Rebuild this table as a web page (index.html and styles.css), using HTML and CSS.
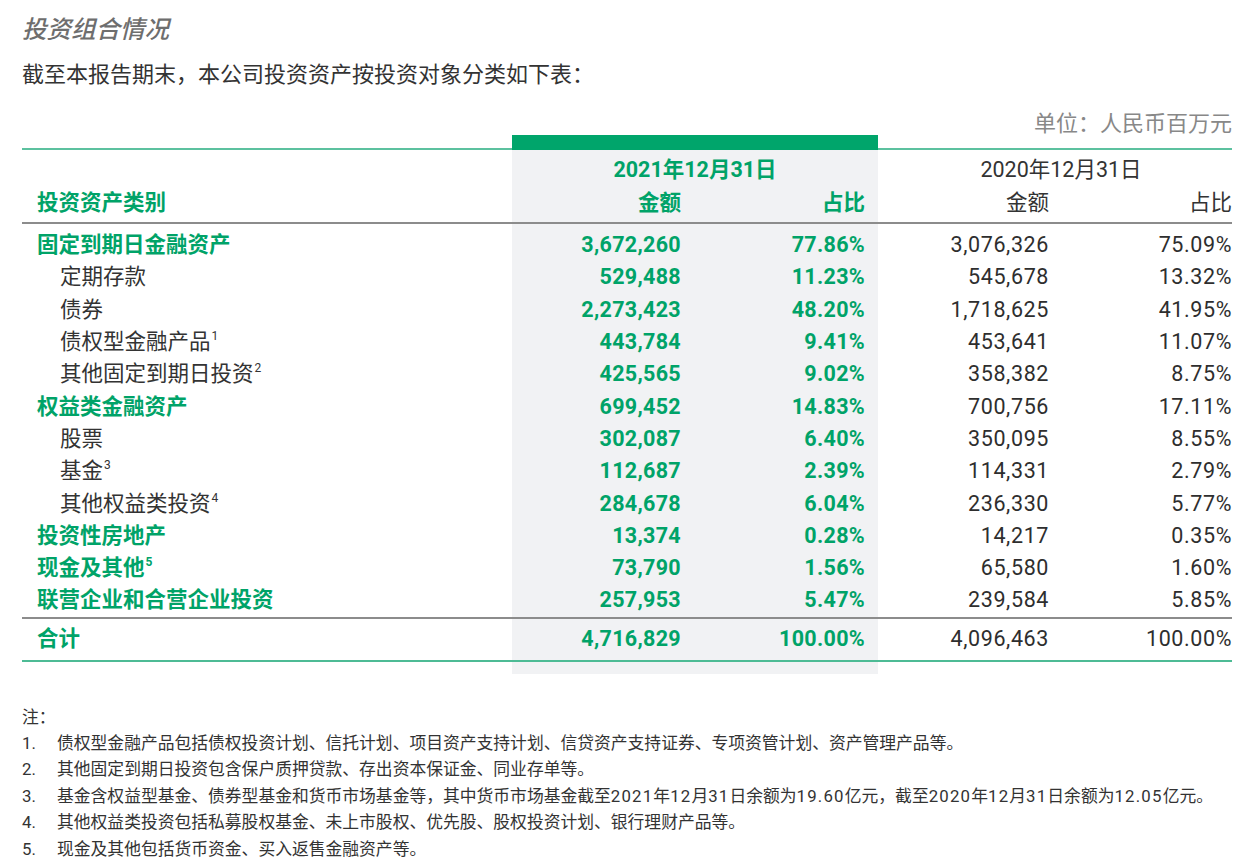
FILE: index.html
```html
<!DOCTYPE html>
<html lang="zh-CN">
<head>
<meta charset="utf-8">
<title>投资组合情况</title>
<link rel="stylesheet" href="styles.css">
</head>
<body>
<div class="page">
  <h2 class="title">投资组合情况</h2>
  <p class="intro">截至本报告期末，本公司投资资产按投资对象分类如下表：</p>
  <div class="unit">单位：人民币百万元</div>
  <table class="tbl">
    <colgroup>
      <col class="c-label"><col class="c-a"><col class="c-b"><col class="c-c"><col class="c-d">
    </colgroup>
    <thead>
      <tr class="bar-row">
        <td class="bar-line"></td>
        <td class="bar" colspan="2"></td>
        <td class="bar-line" colspan="2"></td>
      </tr>
      <tr class="h1">
        <th></th>
        <th class="hl date-hl" colspan="2">2021年12月31日</th>
        <th class="date" colspan="2">2020年12月31日</th>
      </tr>
      <tr class="h2">
        <th class="lbl">投资资产类别</th>
        <th class="hl num g a">金额</th>
        <th class="hl num g b">占比</th>
        <th class="num c">金额</th>
        <th class="num d">占比</th>
      </tr>
    </thead>
    <tbody>
      <tr class="cat first"><td class="lbl">固定到期日金融资产</td><td class="hl a">3,672,260</td><td class="hl b">77.86%</td><td class="c">3,076,326</td><td class="d">75.09%</td></tr>
      <tr class="sub"><td class="lbl">定期存款</td><td class="hl a">529,488</td><td class="hl b">11.23%</td><td class="c">545,678</td><td class="d">13.32%</td></tr>
      <tr class="sub"><td class="lbl">债券</td><td class="hl a">2,273,423</td><td class="hl b">48.20%</td><td class="c">1,718,625</td><td class="d">41.95%</td></tr>
      <tr class="sub"><td class="lbl">债权型金融产品<sup>1</sup></td><td class="hl a">443,784</td><td class="hl b">9.41%</td><td class="c">453,641</td><td class="d">11.07%</td></tr>
      <tr class="sub"><td class="lbl">其他固定到期日投资<sup>2</sup></td><td class="hl a">425,565</td><td class="hl b">9.02%</td><td class="c">358,382</td><td class="d">8.75%</td></tr>
      <tr class="cat"><td class="lbl">权益类金融资产</td><td class="hl a">699,452</td><td class="hl b">14.83%</td><td class="c">700,756</td><td class="d">17.11%</td></tr>
      <tr class="sub"><td class="lbl">股票</td><td class="hl a">302,087</td><td class="hl b">6.40%</td><td class="c">350,095</td><td class="d">8.55%</td></tr>
      <tr class="sub"><td class="lbl">基金<sup>3</sup></td><td class="hl a">112,687</td><td class="hl b">2.39%</td><td class="c">114,331</td><td class="d">2.79%</td></tr>
      <tr class="sub"><td class="lbl">其他权益类投资<sup>4</sup></td><td class="hl a">284,678</td><td class="hl b">6.04%</td><td class="c">236,330</td><td class="d">5.77%</td></tr>
      <tr class="cat"><td class="lbl">投资性房地产</td><td class="hl a">13,374</td><td class="hl b">0.28%</td><td class="c">14,217</td><td class="d">0.35%</td></tr>
      <tr class="cat"><td class="lbl">现金及其他<sup>5</sup></td><td class="hl a">73,790</td><td class="hl b">1.56%</td><td class="c">65,580</td><td class="d">1.60%</td></tr>
      <tr class="cat last"><td class="lbl">联营企业和合营企业投资</td><td class="hl a">257,953</td><td class="hl b">5.47%</td><td class="c">239,584</td><td class="d">5.85%</td></tr>
      <tr class="cat total"><td class="lbl">合计</td><td class="hl a">4,716,829</td><td class="hl b">100.00%</td><td class="c">4,096,463</td><td class="d">100.00%</td></tr>
      <tr class="tail"><td></td><td class="hl" colspan="2"></td><td colspan="2"></td></tr>
    </tbody>
  </table>
  <div class="notes">
    <div class="note-head">注：</div>
    <ol class="note-list">
      <li><span class="n">1.</span><span>债权型金融产品包括债权投资计划、信托计划、项目资产支持计划、信贷资产支持证券、专项资管计划、资产管理产品等。</span></li>
      <li><span class="n">2.</span><span>其他固定到期日投资包含保户质押贷款、存出资本保证金、同业存单等。</span></li>
      <li><span class="n">3.</span><span>基金含权益型基金、债券型基金和货币市场基金等，其中货币市场基金截至<span class="dg">2021</span>年<span class="dg">12</span>月<span class="dg">31</span>日余额为<span class="dg">19.60</span>亿元，截至<span class="dg">2020</span>年<span class="dg">12</span>月<span class="dg">31</span>日余额为<span class="dg">12.05</span>亿元。</span></li>
      <li><span class="n">4.</span><span>其他权益类投资包括私募股权基金、未上市股权、优先股、股权投资计划、银行理财产品等。</span></li>
      <li><span class="n">5.</span><span>现金及其他包括货币资金、买入返售金融资产等。</span></li>
    </ol>
  </div>
</div>
</body>
</html>
```

FILE: styles.css
```css
html, body {
  margin: 0;
  padding: 0;
  background: #ffffff;
}
body {
  font-family: Roboto, "Noto Sans CJK SC", sans-serif;
  color: #333333;
}
.page {
  width: 1210px;
  padding: 14px 28px 0 22px;
}
.title {
  margin: 0;
  font-size: 24.5px;
  line-height: 32px;
  font-weight: 500;
  font-style: italic;
  color: #6e6e6e;
}
.intro {
  margin: 13px 0 0 0;
  font-size: 22px;
  line-height: 32px;
  color: #333333;
}
.unit {
  margin-top: 22px;
  text-align: right;
  font-size: 22px;
  line-height: 22px;
  color: #888888;
}
.tbl {
  width: 1210px;
  border-collapse: separate;
  border-spacing: 0;
  table-layout: fixed;
  font-size: 21.5px;
}
.c-label { width: 490px; }
.c-a { width: 183px; }
.c-b { width: 183px; }
.c-c { width: 184px; }
.c-d { width: 170px; }

.tbl td, .tbl th {
  padding: 0;
}
.bar-row td {
  height: 13px;
  border-bottom: 2px solid #5cc19f;
}
.bar-row td.bar {
  background: #00a56b;
  border-bottom-color: #00a56b;
}
.hl {
  background: #f1f2f4;
}
.h1 th {
  height: 36px;
  padding-top: 2px;
  font-weight: 400;
  line-height: 28px;
  vertical-align: middle;
}
.date-hl {
  color: #00a368;
  font-weight: 700 !important;
  text-align: center;
}
.date {
  text-align: center;
  padding-left: 12px !important;
  color: #333333;
}
.h2 th {
  height: 30px;
  line-height: 28px;
  padding-bottom: 4px;
  font-weight: 400;
  border-bottom: 2px solid #8c8c8c;
  vertical-align: middle;
}
.h2 th.lbl {
  text-align: left;
  padding-left: 15px;
  color: #00a368;
  font-weight: 700;
}
.h2 th.g {
  color: #00a368;
  font-weight: 700;
}
.num { text-align: right; }
.tbl .a { padding-right: 14px; text-align: right; }
.tbl .b { padding-right: 13px; text-align: right; }
.tbl .c { padding-right: 13px; text-align: right; }
.tbl .d { padding-right: 0; text-align: right; }

tbody td {
  height: 32.3px;
  line-height: 30px;
  vertical-align: middle;
  white-space: nowrap;
}
tbody td.hl {
  color: #00a368;
  font-weight: 700;
  letter-spacing: 0.3px;
}
tbody td.c, tbody td.d {
  color: #2e2e2e;
  font-weight: 400;
  letter-spacing: 0.6px;
}
tbody tr.first td {
  padding-top: 5px;
}
tr.cat td.lbl {
  padding-left: 15px;
  color: #00a368;
  font-weight: 700;
}
tr.sub td.lbl {
  padding-left: 38px;
  color: #333333;
}
sup {
  font-size: 12px;
  line-height: 0;
  vertical-align: 9px;
  margin-left: 1px;
}
tr.last td {
  border-bottom: 2px solid #8c8c8c;
}
tr.total td {
  height: 41px;
  border-bottom: 2px solid #4dbb95;
}
tr.tail td {
  height: 12px;
}
.notes {
  margin-top: 30px;
  font-size: 16.8px;
  line-height: 26.4px;
  color: #333333;
}
.note-list {
  list-style: none;
  margin: 0;
  padding: 0;
}
.note-list li {
  display: flex;
}
.note-list .n {
  width: 35px;
  flex: none;
}
.dg {
  letter-spacing: 1.2px;
}
```
